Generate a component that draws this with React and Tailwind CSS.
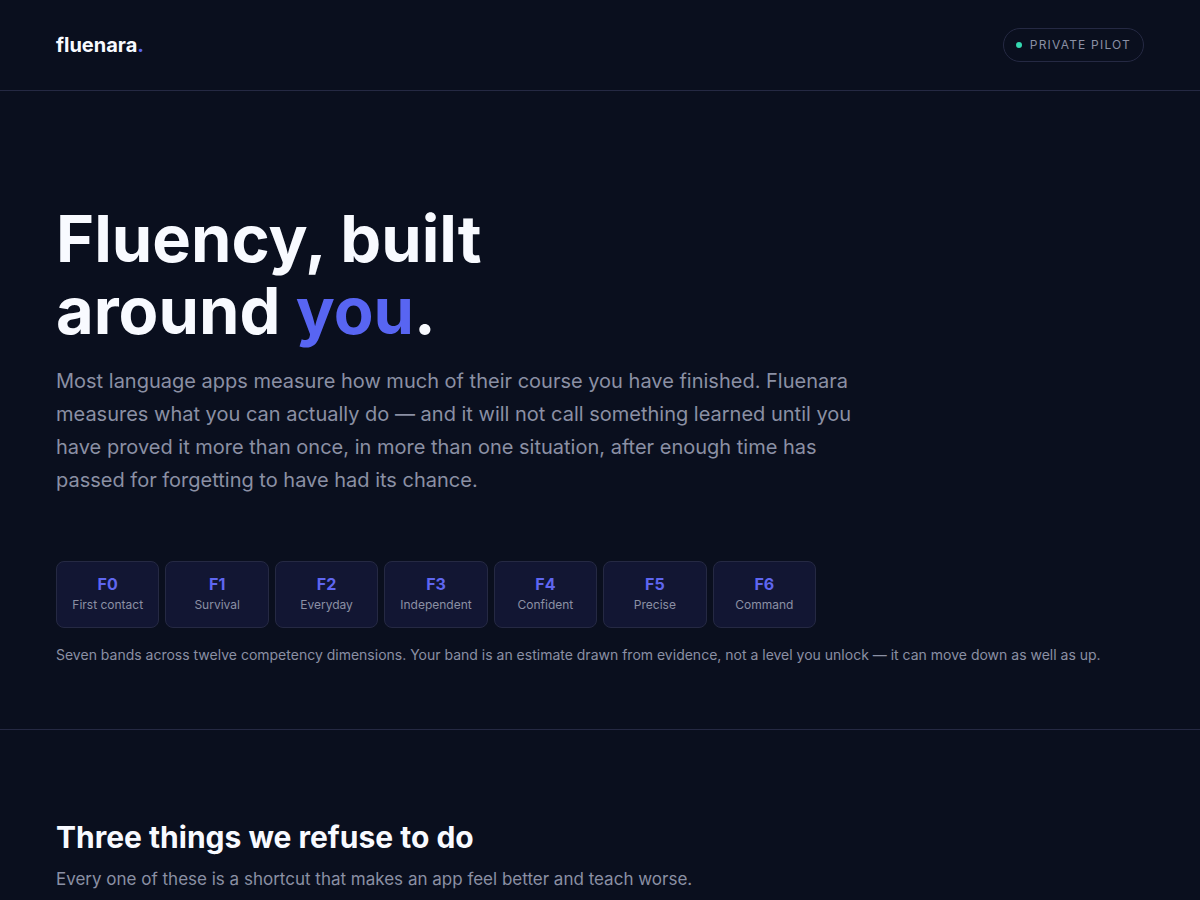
const bands = [
  { code: 'F0', name: 'First contact' },
  { code: 'F1', name: 'Survival' },
  { code: 'F2', name: 'Everyday' },
  { code: 'F3', name: 'Independent' },
  { code: 'F4', name: 'Confident' },
  { code: 'F5', name: 'Precise' },
  { code: 'F6', name: 'Command' },
];

function Header() {
  return (
    <header className="border-b border-[#252943]">
      <div className="flex items-center justify-between px-14 py-7">
        <a href="#" className="text-xl font-bold text-[#f8faff]">
          fluenara<span className="text-[#5865f2]">.</span>
        </a>
        <span className="flex items-center gap-2 rounded-full border border-[#252943] px-3 py-2 text-xs tracking-widest uppercase">
          <span className="size-1.5 rounded-full bg-[#34d8b0]" />
          Private pilot
        </span>
      </div>
    </header>
  );
}

function BandLadder() {
  return (
    <ol className="mt-16 grid max-w-[760px] grid-cols-7 gap-1.5">
      {bands.map(band => (
        <li key={band.code} className="rounded-lg border border-[#252943] bg-[#121633] py-3 text-center">
          <span className="block text-base leading-5 font-bold text-[#5f66f0]">{band.code}</span>
          <span className="block text-xs leading-[21px]">{band.name}</span>
        </li>
      ))}
    </ol>
  );
}

export default function App() {
  return (
    <div className="min-h-screen bg-[#0a0f1e] font-['Inter',sans-serif] text-[#8b90a4]">
      <Header />
      <main>
        <section className="border-b border-[#252943] px-14 pt-28 pb-16">
          <h1 className="text-[65px] leading-[72px] font-bold text-[#f8faff]">
            Fluency, built
            <br />
            around <span className="text-[#5865f2]">you</span>.
          </h1>
          <p className="mt-[18px] max-w-[820px] text-xl leading-[33px]">
            Most language apps measure how much of their course you have finished. Fluenara measures what you can
            actually do — and it will not call something learned until you have proved it more than once, in more than
            one situation, after enough time has passed for forgetting to have had its chance.
          </p>
          <BandLadder />
          <p className="mt-4 text-sm leading-[21px]">
            Seven bands across twelve competency dimensions. Your band is an estimate drawn from evidence, not a level
            you unlock — it can move down as well as up.
          </p>
        </section>
        <section className="px-14 pt-[87px]">
          <h2 className="text-[30px] leading-10 font-bold text-[#f8faff]">Three things we refuse to do</h2>
          <p className="mt-2 text-[17px] leading-7">
            Every one of these is a shortcut that makes an app feel better and teach worse.
          </p>
        </section>
      </main>
    </div>
  );
}
